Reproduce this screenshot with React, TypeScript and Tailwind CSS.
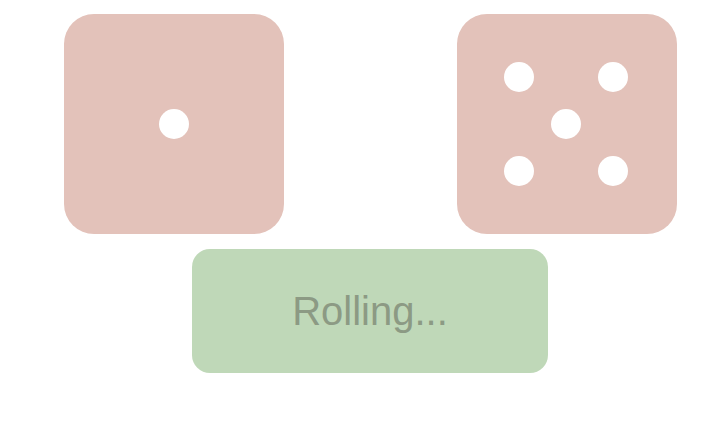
import React from 'react'

const pipLayouts: Record<number, [number, number][]> = {
  1: [[110, 110]],
  5: [
    [62, 63],
    [156, 63],
    [109, 110],
    [62, 157],
    [156, 157],
  ],
}

function Die({ value }: { value: number }) {
  return (
    <div className="relative h-[220px] w-[220px] rounded-[30px] bg-[#e3c2ba]">
      {pipLayouts[value].map(([x, y], i) => (
        <span
          key={i}
          className="absolute h-[30px] w-[30px] -translate-x-1/2 -translate-y-1/2 rounded-full bg-white"
          style={{ left: x, top: y }}
        />
      ))}
    </div>
  )
}

export default function App() {
  return (
    <div className="flex h-[423px] w-[707px] flex-col bg-white pl-[64px] pt-[14px] font-['Liberation_Sans',Arial,sans-serif]">
      <div className="flex w-[613px] justify-between">
        <Die value={1} />
        <Die value={5} />
      </div>
      <button
        disabled
        className="ml-[128px] mt-[15px] flex h-[124px] w-[356px] items-center justify-center rounded-[18px] bg-[#bfd8b8] text-[40px] text-[#8c9a84]"
      >
        Rolling...
      </button>
    </div>
  )
}
